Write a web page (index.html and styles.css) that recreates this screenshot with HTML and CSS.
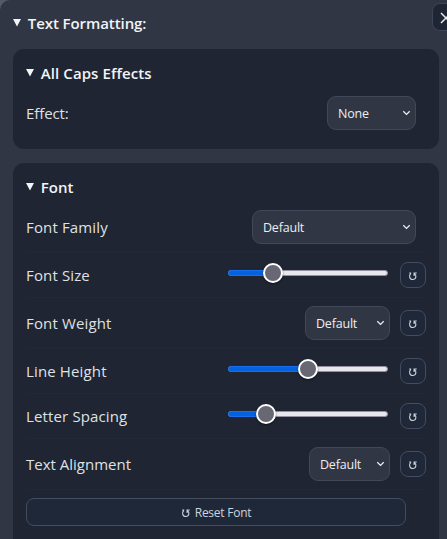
FILE: index.html
```html
<!DOCTYPE html>
<html lang="en">
<head>
<meta charset="utf-8">
<title>Text Formatting</title>
<link rel="stylesheet" href="styles.css">
</head>
<body>
<svg class="defs" width="0" height="0">
  <symbol id="reset" viewBox="0 0 10 10"><path d="M2.9 2.5C.6 4 1.3 8.5 4.8 8.5S8.8 4.3 6.5 2.8M6.1 5V2h2.6M1.2 2h2" fill="none" stroke="currentColor" stroke-width="1.1"/></symbol>
  <symbol id="chevron" viewBox="0 0 8 6"><path d="M.8 1.2 4 4.4 7.2 1.2" fill="none" stroke="currentColor" stroke-width="1.3"/></symbol>
  <symbol id="marker" viewBox="0 0 8 8"><path d="M0 0h8L4 7.5z" fill="currentColor"/></symbol>
</svg>
<main class="panel">
  <button class="close" aria-label="Close"><svg width="12" height="12" viewBox="0 0 12 12"><path d="M1 1l10 10M11 1 1 11" fill="none" stroke="currentColor" stroke-width="1.5"/></svg></button>
  <h1 class="title main-title"><svg class="marker"><use href="#marker"/></svg><span class="title-text">Text Formatting:</span></h1>
  <section class="card effects">
    <h2 class="title"><svg class="marker"><use href="#marker"/></svg><span class="caps-text">All Caps Effects</span></h2>
    <div class="row tall plain"><span class="label effect">Effect:</span><div class="select w-effect"><span>None</span><svg class="chevron"><use href="#chevron"/></svg></div></div>
  </section>
  <section class="card">
    <h2 class="title"><svg class="marker"><use href="#marker"/></svg><span>Font</span></h2>
    <div class="row tall"><span class="label">Font Family</span><div class="select w-family"><span>Default</span><svg class="chevron"><use href="#chevron"/></svg></div></div>
    <div class="row"><span class="label">Font Size</span><div class="slider"><i class="fill" style="width:45px"></i><i class="thumb" style="left:35px"></i></div><button class="reset"><svg><use href="#reset"/></svg></button></div>
    <div class="row tall"><span class="label">Font Weight</span><div class="select w-weight"><span>Default</span><svg class="chevron"><use href="#chevron"/></svg></div><button class="reset"><svg><use href="#reset"/></svg></button></div>
    <div class="row"><span class="label">Line Height</span><div class="slider"><i class="fill" style="width:80px"></i><i class="thumb" style="left:70px"></i></div><button class="reset"><svg><use href="#reset"/></svg></button></div>
    <div class="row"><span class="label">Letter Spacing</span><div class="slider"><i class="fill" style="width:38px"></i><i class="thumb" style="left:28px"></i></div><button class="reset"><svg><use href="#reset"/></svg></button></div>
    <div class="row tall"><span class="label align">Text Alignment</span><div class="select w-align"><span>Default</span><svg class="chevron"><use href="#chevron"/></svg></div><button class="reset"><svg><use href="#reset"/></svg></button></div>
    <button class="reset-all"><svg><use href="#reset"/></svg><span>Reset Font</span></button>
  </section>
</main>
</body>
</html>
```
FILE: styles.css
```css
* { box-sizing: border-box; }
body {
  margin: 0;
  height: 539px;
  overflow: hidden;
  background: #555b66;
  color: #e6e8ec;
  font-family: "Open Sans", "Noto Sans", sans-serif;
  font-size: 15px;
}
svg { display: block; flex: none; }
.defs { position: absolute; }
button { padding: 0; font: inherit; }
.panel {
  position: relative;
  height: 560px;
  padding: 0 8px 0 13px;
  background: #303644;
  border-radius: 10px 0 0 0;
  overflow: hidden;
}
.close {
  position: absolute;
  top: 3px;
  left: 432px;
  width: 28px;
  height: 28px;
  padding-left: 7px;
  padding-top: 2px;
  background: #1e2533;
  border: 1px solid #3d4656;
  border-radius: 8px;
  color: #e8ebf0;
}
.title {
  display: flex;
  align-items: center;
  gap: 6px;
  margin: 0;
  height: 49px;
  font-size: 15px;
  font-weight: 600;
  color: #f2f4f7;
  white-space: nowrap;
}
.main-title { padding-bottom: 2px; }
.title > span { position: relative; top: -1px; left: .5px; }
.marker { width: 8px; height: 8px; margin: -2px 0 0 .3px; }
.title-text { letter-spacing: -.08px; }
.caps-text { letter-spacing: .08px; }
.card {
  height: 386px;
  padding: 0 13px;
  background: #1f2532;
  border-radius: 11px;
}
.effects { height: 100px; margin-bottom: 14px; }
.card .title { height: 39px; padding-top: 11px; }
.row {
  display: flex;
  align-items: center;
  height: 45px;
  border-bottom: 1px solid #1f2a35;
}
.tall { height: 51px; }
.plain { border-color: transparent; }
.label { margin-right: auto; white-space: nowrap; color: #dfe1e5; letter-spacing: .14px; }
.effect { letter-spacing: -.1px; }
.align { letter-spacing: 0; }
.select {
  display: flex;
  align-items: center;
  justify-content: space-between;
  height: 34px;
  padding: 0 4px 0 10px;
  background: #303644;
  border: 1px solid #41485a;
  border-radius: 9px;
  font-size: 12.5px;
  letter-spacing: -.2px;
  color: #eceef2;
}
.chevron { width: 9px; height: 6px; }
.w-effect { width: 89px; margin-right: 10px; }
.w-family { width: 164px; margin-right: 10px; }
.w-weight { width: 85px; }
.w-align { width: 81px; }
.slider {
  position: relative;
  width: 160px;
  height: 6px;
  margin: 0 2px 5px 0;
  background: #e9e7ed;
  border: 1px solid #92919d;
  border-radius: 3px;
}
.fill {
  position: absolute;
  left: -1px;
  top: -1px;
  height: 6px;
  background: #0561dd;
  border: 1px solid #196eec;
  border-radius: 3px 0 0 3px;
}
.thumb {
  position: absolute;
  top: -8px;
  width: 20px;
  height: 20px;
  margin-left: -1px;
  background: #686875;
  border: 2px solid #fff;
  border-radius: 50%;
  box-shadow: 0 1px 2px #0008;
}
.reset {
  display: grid;
  place-items: center;
  width: 26px;
  height: 26px;
  margin-left: 10px;
  padding-top: 2px;
  background: #1f2838;
  border: 1px solid #434d5d;
  border-radius: 8px;
  color: #cbd2dc;
}
.reset svg, .reset-all svg { width: 10px; height: 10px; }
.reset-all {
  display: flex;
  align-items: center;
  justify-content: center;
  gap: 4px;
  width: 380px;
  height: 28px;
  margin-top: 8px;
  background: #1f2838;
  border: 1px solid #434d5d;
  border-radius: 8px;
  color: #ccd4df;
  font-size: 12px;
  letter-spacing: -.25px;
}
.reset-all svg { margin-top: 2px; }
```
